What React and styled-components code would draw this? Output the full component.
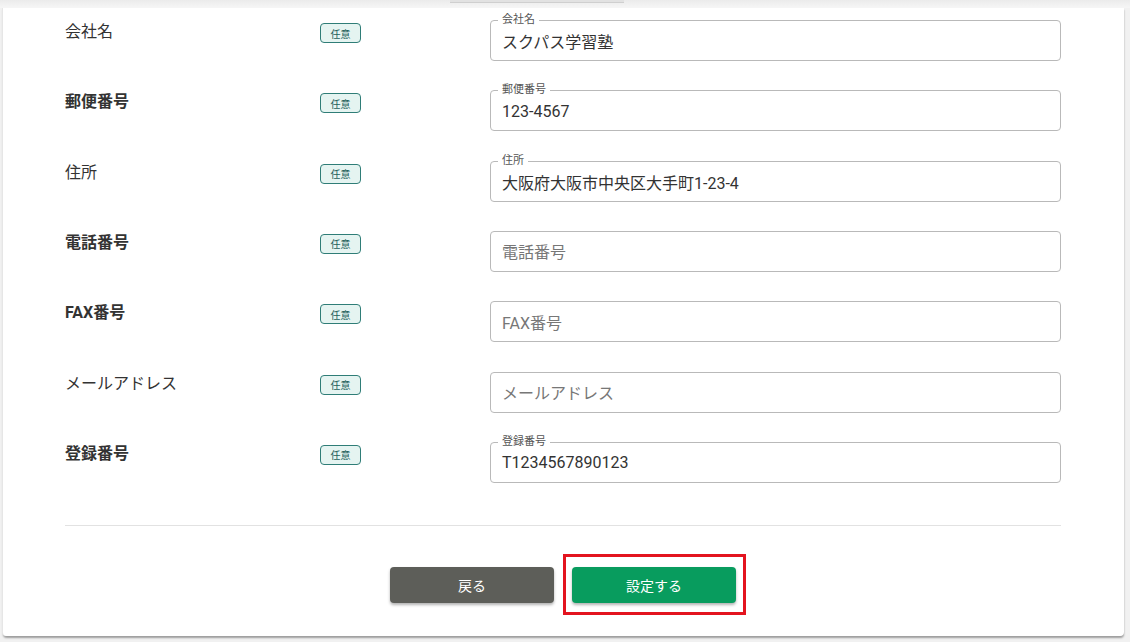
import React from "react";
import styled, { createGlobalStyle } from "styled-components";

const GlobalStyle = createGlobalStyle`
  html, body {
    margin: 0;
    padding: 0;
    background: #f1f1f1;
    font-family: "Roboto", "Noto Sans CJK JP", sans-serif;
    color: #333;
  }
`;

const Page = styled.div`
  width: 1130px;
  height: 642px;
  overflow: hidden;
`;

const TopStrip = styled.div`
  height: 8px;
  padding-left: 450px;
  background: linear-gradient(#ebebeb, #f6f6f6);
`;

const TopTab = styled.div`
  width: 174px;
  height: 2px;
  background: #e2e2e2;
  border-bottom: 1px solid #cfcfcf;
`;

const Card = styled.section`
  margin: 0 6px 0 3px;
  height: 628px;
  box-sizing: border-box;
  padding: 12px 63px 0 62px;
  background: #fff;
  border-radius: 0 0 4px 4px;
  box-shadow: -1px 0 0 #e6e6e6, 0 2px 2px rgba(0, 0, 0, 0.35);
`;

const Form = styled.div`
  display: grid;
  grid-template-columns: 255px 170px 1fr;
  row-gap: 29.33px;
`;

const Label = styled.div`
  font-size: 16px;
  line-height: 24px;
  font-weight: ${({ bold }) => (bold ? 700 : 400)};
  color: #333;
`;

const Badge = styled.span`
  margin-top: 3px;
  width: 41px;
  height: 20px;
  box-sizing: border-box;
  display: flex;
  align-items: center;
  justify-content: center;
  border: 1px solid #2f7d77;
  border-radius: 4px;
  background: #e5f4f1;
  color: #1d5e5a;
  font-size: 10px;
`;

const Field = styled.div`
  position: relative;
  height: 41px;
  box-sizing: border-box;
  border: 1px solid #b9b9b9;
  border-radius: 4px;
  display: flex;
  align-items: center;
  padding: 0 11px;
`;

const FloatLabel = styled.span`
  position: absolute;
  left: 7px;
  top: -8px;
  padding: 0 4px;
  background: #fff;
  font-size: 11px;
  line-height: 14px;
  color: #555;
`;

const Value = styled.span`
  font-size: 16px;
  color: ${({ placeholder }) => (placeholder ? "#777" : "#333")};
  padding-top: ${({ placeholder }) => (placeholder ? "0" : "1px")};
`;

const Divider = styled.hr`
  margin: 42px 0 0;
  border: none;
  border-top: 1px solid #e2e2e2;
`;

const Actions = styled.div`
  margin-top: 41px;
  display: flex;
  justify-content: center;
  gap: 18px;
`;

const Button = styled.button`
  width: 164px;
  height: 36px;
  border: none;
  border-radius: 4px;
  font-family: inherit;
  font-size: 14px;
  color: #fff;
  background: ${({ primary }) => (primary ? "#089c5e" : "#5d5e59")};
  box-shadow: 0 2px 3px rgba(0, 0, 0, 0.3);
`;

const Highlight = styled.span`
  position: relative;
  display: inline-flex;
`;

const HighlightFrame = styled.span`
  position: absolute;
  top: -13px;
  left: -9px;
  right: -10px;
  bottom: -12px;
  border: 3px solid #e3141f;
  pointer-events: none;
`;

const rows = [
  { label: "会社名", value: "スクパス学習塾" },
  { label: "郵便番号", value: "123-4567", bold: true },
  { label: "住所", value: "大阪府大阪市中央区大手町1-23-4" },
  { label: "電話番号", placeholder: "電話番号", bold: true },
  { label: "FAX番号", placeholder: "FAX番号", bold: true },
  { label: "メールアドレス", placeholder: "メールアドレス" },
  { label: "登録番号", value: "T1234567890123", bold: true },
];

function App() {
  return (
    <Page>
      <GlobalStyle />
      <TopStrip>
        <TopTab />
      </TopStrip>
      <Card>
        <Form>
          {rows.map((row) => (
            <React.Fragment key={row.label}>
              <Label bold={row.bold}>{row.label}</Label>
              <div>
                <Badge>任意</Badge>
              </div>
              <Field>
                {row.value ? (
                  <>
                    <FloatLabel>{row.label}</FloatLabel>
                    <Value>{row.value}</Value>
                  </>
                ) : (
                  <Value placeholder="1">{row.placeholder}</Value>
                )}
              </Field>
            </React.Fragment>
          ))}
        </Form>
        <Divider />
        <Actions>
          <Button>戻る</Button>
          <Highlight>
            <Button primary>設定する</Button>
            <HighlightFrame />
          </Highlight>
        </Actions>
      </Card>
    </Page>
  );
}

export default App;
